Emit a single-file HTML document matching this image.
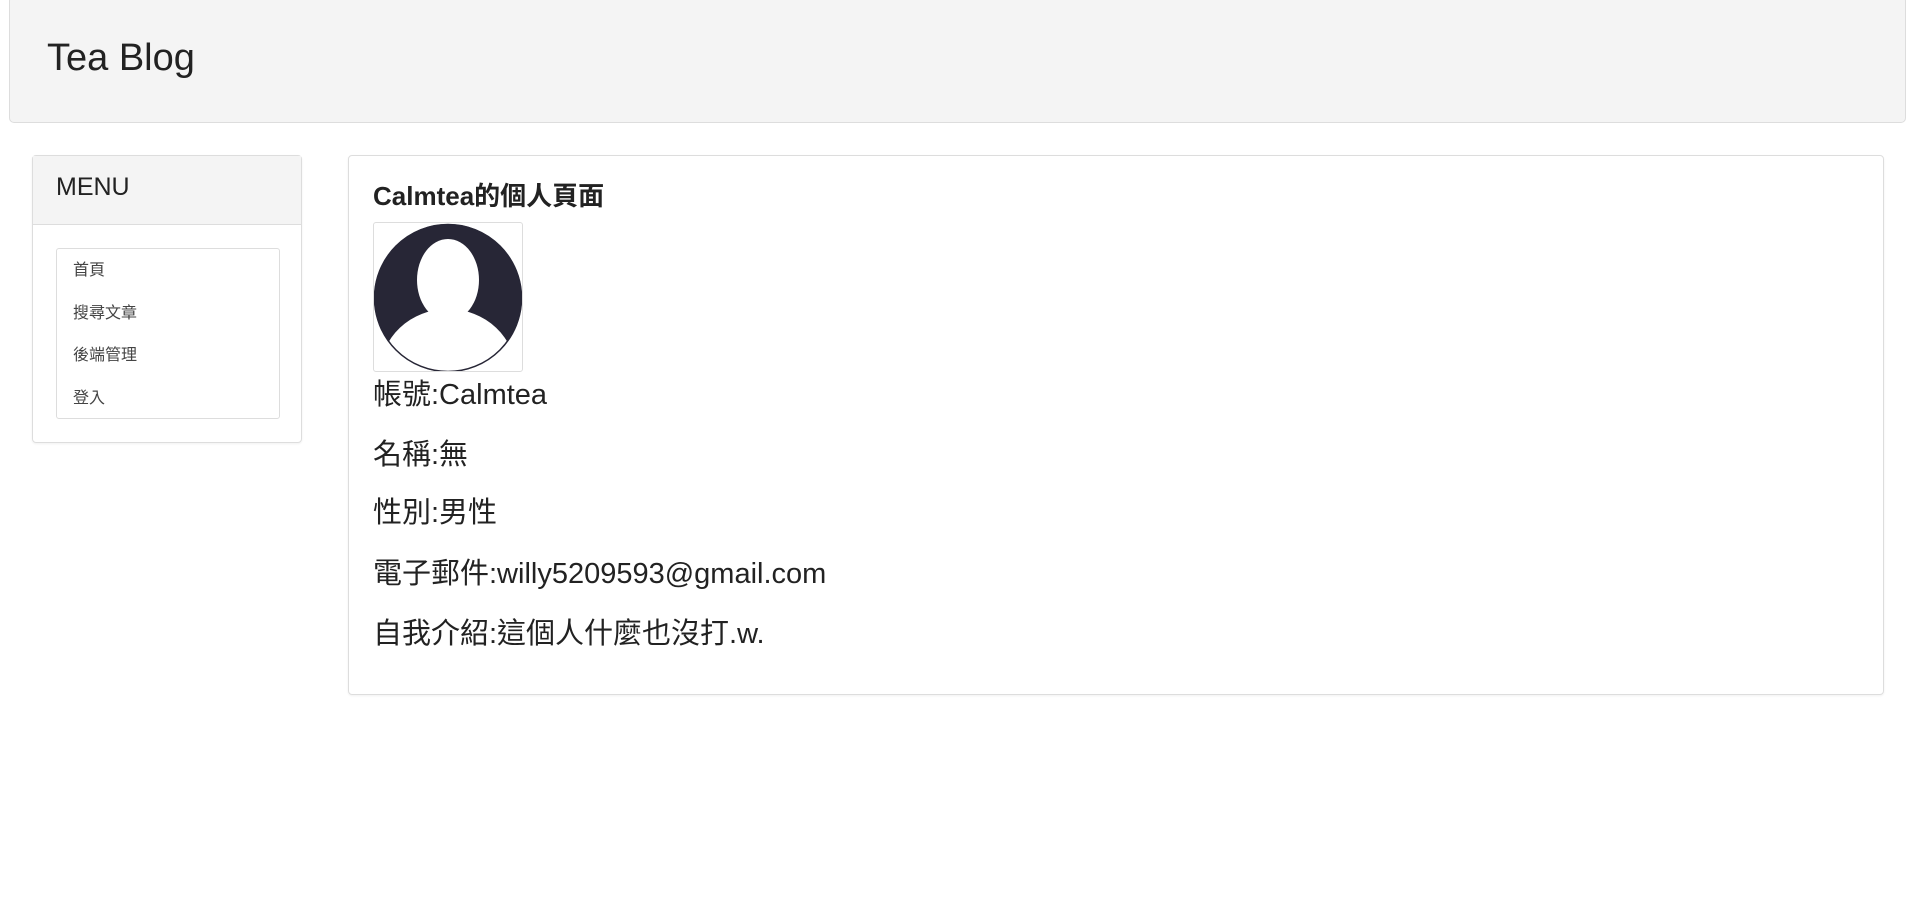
<!DOCTYPE html>
<html><head><meta charset="utf-8">
<style>
*{box-sizing:border-box;margin:0;padding:0}
body{width:1908px;height:923px;background:#fff;font-family:"Liberation Sans","Noto Sans CJK TC",sans-serif;color:#222;position:relative;overflow:hidden}
.nav{position:absolute;left:9px;top:-4px;width:1897px;height:127px;background:#f4f4f4;border:1px solid #ddd;border-radius:5px}
.nav span{position:absolute;left:37px;top:38px;font-size:38px;line-height:46px;color:#222}
.side{position:absolute;left:32px;top:155px;width:270px;height:288px;border:1px solid #ddd;border-radius:4px;box-shadow:0 1px 2px rgba(0,0,0,.06)}
.side .hd{height:69px;background:#f4f4f4;border-bottom:1px solid #ddd;font-size:25px;line-height:30px;padding:16px 0 0 23px;color:#222}
.lg{position:absolute;left:23px;top:92px;width:224px;height:171px;border:1px solid #ddd;border-radius:3px}
.lg div{height:42.5px;font-size:16px;line-height:44px;padding-left:16px;color:#444}
.main{position:absolute;left:348px;top:155px;width:1536px;height:540px;border:1px solid #ddd;border-radius:4px;box-shadow:0 1px 2px rgba(0,0,0,.06)}
.main h3{position:absolute;left:24px;top:24px;font-size:26px;line-height:32px;font-weight:bold;color:#222}
.av{position:absolute;left:24px;top:66px;width:150px;height:150px;border:1px solid #ddd;border-radius:3px;overflow:hidden}
.ln{position:absolute;left:24px;font-size:29px;line-height:34px;color:#222}
</style></head><body>
<div class="nav"><span>Tea Blog</span></div>
<div class="side"><div class="hd">MENU</div>
<div class="lg"><div>首頁</div><div>搜尋文章</div><div>後端管理</div><div>登入</div></div></div>
<div class="main">
<h3>Calmtea的個人頁面</h3>
<div class="av"><svg width="150" height="150" viewBox="0 0 150 150">
<defs><clipPath id="c"><circle cx="74" cy="75" r="74"/></clipPath></defs>
<circle cx="74" cy="75" r="74" fill="#272636"/>
<g clip-path="url(#c)" fill="#fff">
<ellipse cx="74" cy="57" rx="31" ry="41"/>
<ellipse cx="74" cy="150" rx="68" ry="64"/>
<rect x="58" y="80" width="32" height="20"/>
</g>
<circle cx="74" cy="75" r="73.5" fill="none" stroke="#272636" stroke-width="1.5"/>
</svg></div>
<div class="ln" style="top:222px">帳號:Calmtea</div>
<div class="ln" style="top:282px">名稱:無</div>
<div class="ln" style="top:340px">性別:男性</div>
<div class="ln" style="top:401px">電子郵件:willy5209593@gmail.com</div>
<div class="ln" style="top:461px">自我介紹:這個人什麼也沒打.w.</div>
</div>
</body></html>
